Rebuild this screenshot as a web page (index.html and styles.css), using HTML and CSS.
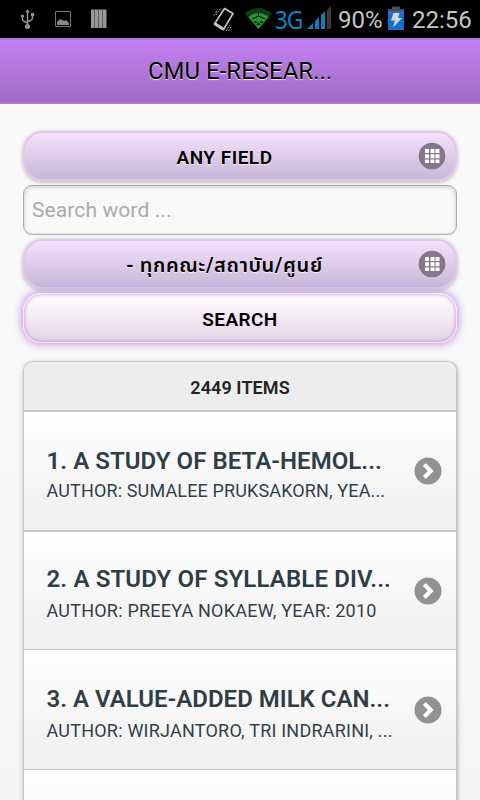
FILE: index.html
```html
<!DOCTYPE html>
<html lang="en">
<head>
<meta charset="utf-8">
<title>CMU E-Research</title>
<link rel="stylesheet" href="styles.css">
</head>
<body>
<div class="status">
  <svg class="notices" width="120" height="38" viewBox="0 0 120 38" fill="none" stroke="#949494">
    <path d="M27.500 12V26M22.500 16v3.500q0 1.500 2 2l3 1.500M32.500 15v3q0 1.500-2 2.500l-3 1" stroke-width="1.400"/>
    <path d="M25.300 12.500L27.500 9l2.200 3.500z" fill="#949494" stroke="none"/>
    <circle cx="27.500" cy="26.500" r="2.500" fill="#949494" stroke="none"/>
    <circle cx="22.500" cy="16" r="1.600" fill="#949494" stroke="none"/>
    <path d="M31 13h3.200v3.200H31z" fill="#949494" stroke="none"/>
    <path d="M55.500 11.500h15v15h-15z" stroke="#777"/>
    <path d="M57 25v-3l3-3 2 1 2 1 2-1 3 3v2z" fill="#888" stroke="none"/>
    <path d="M91 9.500h15.500v18.500H91z" fill="#999" stroke="none"/>
    <path d="M94.500 10v18M98.500 10v18M102.500 10v18" stroke="#5c5c5c"/>
  </svg>
  <svg class="signals" width="62" height="38" viewBox="210 0 62 38" fill="none">
    <path d="M224.500 8.500L233 13.500L223.500 29.500L214.500 24z" stroke="#c4c4c4" stroke-width="1.600" stroke-linejoin="round"/>
    <path d="M215 22l8.500 5.500-1 3-9-6z" fill="#c4c4c4"/>
    <path d="M216 15l5-7M214 15.500l4-6M226 31l4-6M228.500 31l3-5" stroke="#aaa" stroke-dasharray="2 1"/>
    <path d="M244.500 13.500Q258 2.500 272 13.500L258.500 29z" fill="#103b15"/>
    <path d="M248.500 17Q258.500 9 268.500 17L258.500 29z" fill="#249a2e"/>
    <path d="M252 19l6.500-3 6.500 3M254 22h3m3 0h3M258.500 12v4M257 25l1.500-2 1.500 2" stroke="#061b08" stroke-width="1.300"/>
  </svg>
  <span class="net">3G</span>
  <svg class="bars" width="24" height="38" viewBox="307 0 24 38" fill="#0b7fbd">
    <path d="M307 29l6-6v6zM315 21l4-4v12h-4zM321 15l4-4v18h-4z"/>
    <path d="M327 10l4-4v23h-4z" fill="#3a3a3a"/>
  </svg>
  <span class="pct">90%</span>
  <svg class="battery" width="16" height="38" viewBox="388 0 16 38">
    <path d="M392 6.500h8V9h4v3h-16V9h4z" fill="#4b4b4b"/>
    <path d="M388 11h16v19h-16z" fill="#1a6fc9"/>
    <path d="M393.500 13h6l-1.500 5h4l-9 9.500 2-7h-4z" fill="#d3d7dc"/>
  </svg>
  <span class="clock">22:56</span>
</div>
<header class="bar"><h1>CMU E-RESEAR...</h1></header>
<main>
  <div class="select"><span class="any">ANY FIELD</span>
    <svg class="icon" width="28" height="28" viewBox="0 0 28 28"><circle cx="14" cy="14" r="13.300" fill="#857789"/><path d="M7 7h4v4H7zM12.500 7h4v4h-4zM17.500 7h4v4h-4zM7 12.300h4v4H7zM12.500 12.300h4v4h-4zM17.500 12.300h4v4h-4zM7 17.500h4v3.500H7zM12.500 17.500h4v3.500h-4zM17.500 17.500h4v3.500h-4z" fill="#fff"/></svg>
  </div>
  <input class="search" type="text" placeholder="Search word ...">
  <div class="select"><span class="thai">- ทุกคณะ/สถาบัน/ศูนย์</span>
    <svg class="icon" width="28" height="28" viewBox="0 0 28 28"><circle cx="14" cy="14" r="13.300" fill="#857789"/><path d="M7 7h4v4H7zM12.500 7h4v4h-4zM17.500 7h4v4h-4zM7 12.300h4v4H7zM12.500 12.300h4v4h-4zM17.500 12.300h4v4h-4zM7 17.500h4v3.500H7zM12.500 17.500h4v3.500h-4zM17.500 17.500h4v3.500h-4z" fill="#fff"/></svg>
  </div>
  <button class="go"><span>SEARCH</span></button>
  <section class="list">
    <div class="count"><span>2449 ITEMS</span></div>
    <article class="item first"><div class="text"><h2><span class="t1">1. A STUDY OF BETA-HEMOL...</span></h2><p><span class="a1">AUTHOR: SUMALEE PRUKSAKORN, YEA...</span></p></div>
      <svg class="arrow" width="28" height="28" viewBox="0 0 28 28"><circle cx="14" cy="14" r="13.500" fill="#929292"/><path d="M10.300 7.500l6.500 6.500-6.500 6.500" fill="none" stroke="#fff" stroke-width="4"/></svg></article>
    <article class="item second"><div class="text"><h2><span class="t2">2. A STUDY OF SYLLABLE DIV...</span></h2><p><span class="a2">AUTHOR: PREEYA NOKAEW, YEAR: 2010</span></p></div>
      <svg class="arrow" width="28" height="28" viewBox="0 0 28 28"><circle cx="14" cy="14" r="13.500" fill="#929292"/><path d="M10.300 7.500l6.500 6.500-6.500 6.500" fill="none" stroke="#fff" stroke-width="4"/></svg></article>
    <article class="item third"><div class="text"><h2><span class="t3">3. A VALUE-ADDED MILK CAN...</span></h2><p><span class="a3">AUTHOR: WIRJANTORO, TRI INDRARINI, ...</span></p></div>
      <svg class="arrow" width="28" height="28" viewBox="0 0 28 28"><circle cx="14" cy="14" r="13.500" fill="#929292"/><path d="M10.300 7.500l6.500 6.500-6.500 6.500" fill="none" stroke="#fff" stroke-width="4"/></svg></article>
    <article class="item last"></article>
  </section>
</main>
</body>
</html>
```
FILE: styles.css
```css
* { box-sizing: border-box; }
html, body { margin: 0; height: 800px; overflow: hidden; }
body { background: linear-gradient(#fafafa, #f5f5f5); font-family: Roboto, "Liberation Sans", sans-serif; }
.status { height: 38px; background: #000; display: flex; align-items: center; color: #c6c6c6; font-size: 24px; line-height: 38px; white-space: nowrap; }
.status svg { flex: none; }
.signals { margin-left: 90px; }
.net { width: 35px; padding-left: 3px; font: 26px/34px "Noto Sans", sans-serif; color: #0b84c1; letter-spacing: -1px; transform: scaleX(.88); transform-origin: left; }
.pct { width: 50px; margin-left: 7px; padding-top: 2px; }
.clock { margin-left: 8px; padding-top: 2px; }
.bar { height: 66px; border: solid #b174dc; border-width: 2px 0; background: linear-gradient(#c380f1, #9d6bc2); }
h1 { margin: 0 0 0 148px; font-size: 24px; font-weight: 400; line-height: 63px; color: #000; text-shadow: 0 1px 1px #eee; white-space: nowrap; }
main { height: 696px; overflow: hidden; padding: 27px 22px 0 23px; }
.select, .search, .go { display: flex; align-items: center; width: 434px; height: 50px; font-size: 19px; font-weight: 500; color: #000; }
.select { justify-content: center; border: 2px solid #dec9ee; border-radius: 20px; background: linear-gradient(#f5e0fd, #c9b7d7); box-shadow: 0 1px 4px rgba(0,0,0,.3); padding: 3px 9px 0 19px; text-shadow: 0 1px 1px #f6eefa; }
.select > span { flex: 1; text-align: center; padding-right: 13px; font-weight: 600; letter-spacing: .5px; }
.select > .thai { font-size: 20px; letter-spacing: .6px; font-family: Roboto, "Noto Sans Thai", "Noto Sans", sans-serif; }
.icon { flex: none; margin-top: -4px; }
.search { margin: 4px 0; border: 1px solid #aaa; border-radius: 9px; background: #f9f9f9; box-shadow: inset 0 1px 4px rgba(0,0,0,.2); padding: 0 8px; font: 400 21px Roboto, sans-serif; letter-spacing: .1px; }
.search::placeholder { color: #aaa; opacity: 1; }
.go { justify-content: center; margin-top: 4px; padding: 3px 0 0; border: 1px solid #ffe4f4; border-radius: 18px; background: linear-gradient(#fff, #e5d4e7); box-shadow: 0 0 8px 1px #bd8bea, inset 0 0 4px #bd8bd0; font-family: Roboto, sans-serif; font-weight: 600; letter-spacing: .4px; }
.list { margin-top: 18px; border: 1px solid #c8c8c8; border-right-width: 2px; border-radius: 10px 10px 0 0; box-shadow: 0 1px 4px rgba(0,0,0,.22); overflow: hidden; }
.count { height: 50px; background: #ededed; border-bottom: 2px solid #c8c8c8; display: flex; align-items: center; justify-content: center; padding-top: 3px; font-size: 18px; font-weight: 600; color: #222; letter-spacing: .1px; }
.item { height: 118px; display: flex; padding: 0 14px 0 22.500px; border-bottom: 1px solid #c8c8c8; background: linear-gradient(#fff, #efefef); color: #2f3e46; text-shadow: 0 1px 0 #fff; }
.first { height: 120px; border-bottom-width: 2px; }
.third { height: 120px; }
.text { width: 367.500px; padding-top: 34px; }
.second .text { padding-top: 32px; }
h2, p { margin: 0; white-space: nowrap; }
h2 { font-size: 24px; font-weight: 600; line-height: 30px; }
p { font-size: 18px; line-height: 24px; margin-top: 5px; }
.first p { margin-top: 3px; }
.t1 { letter-spacing: .05px; }
.t2 { letter-spacing: .14px; }
.a1 { letter-spacing: .14px; }
.a2, .a3 { letter-spacing: .22px; }
.arrow { flex: none; margin-top: 45px; }
.third .arrow { margin-top: 46px; }
```
